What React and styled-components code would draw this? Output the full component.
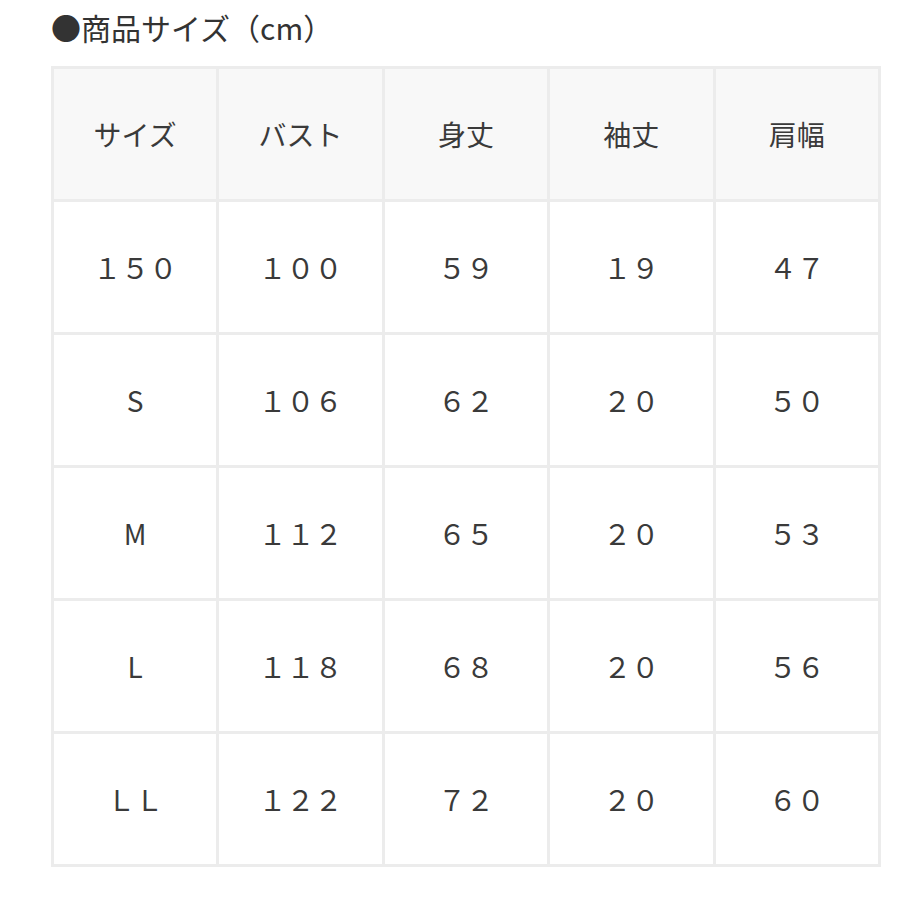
import React from "react";
import styled, { createGlobalStyle } from "styled-components";

const Global = createGlobalStyle`
  html, body {
    margin: 0;
    padding: 0;
    background: #fff;
  }
  body {
    font-family: "Noto Sans CJK JP", "Noto Sans", sans-serif;
    color: #333;
  }
`;

const Page = styled.div`
  width: 900px;
  padding: 6px 0 0 51px;
  box-sizing: border-box;
`;

const Title = styled.h2`
  margin: 0;
  font-size: 30px;
  font-weight: 400;
  line-height: 42px;
  color: #333;
`;

const Table = styled.table`
  margin-top: 18px;
  width: 830px;
  border-collapse: collapse;
  table-layout: fixed;
  border: 3px solid #ececec;
`;

const Cell = styled.td`
  height: 130px;
  border: 3px solid #ececec;
  text-align: center;
  vertical-align: middle;
  font-size: 28px;
  font-weight: 400;
  color: #3a3a3a;
  background: ${(p) => (p.$head ? "#f8f8f8" : "#fff")};
  padding: 0;
`;

const head = ["サイズ", "バスト", "身丈", "袖丈", "肩幅"];
const rows = [
  ["１５０", "１００", "５９", "１９", "４７"],
  ["S", "１０６", "６２", "２０", "５０"],
  ["M", "１１２", "６５", "２０", "５３"],
  ["L", "１１８", "６８", "２０", "５６"],
  ["ＬＬ", "１２２", "７２", "２０", "６０"],
];

export default function App() {
  return (
    <Page>
      <Global />
      <Title>●商品サイズ（cm）</Title>
      <Table>
        <tbody>
          <tr>
            {head.map((h) => (
              <Cell as="th" $head key={h}>
                {h}
              </Cell>
            ))}
          </tr>
          {rows.map((r, i) => (
            <tr key={i}>
              {r.map((c, j) => (
                <Cell key={j}>{c}</Cell>
              ))}
            </tr>
          ))}
        </tbody>
      </Table>
    </Page>
  );
}
